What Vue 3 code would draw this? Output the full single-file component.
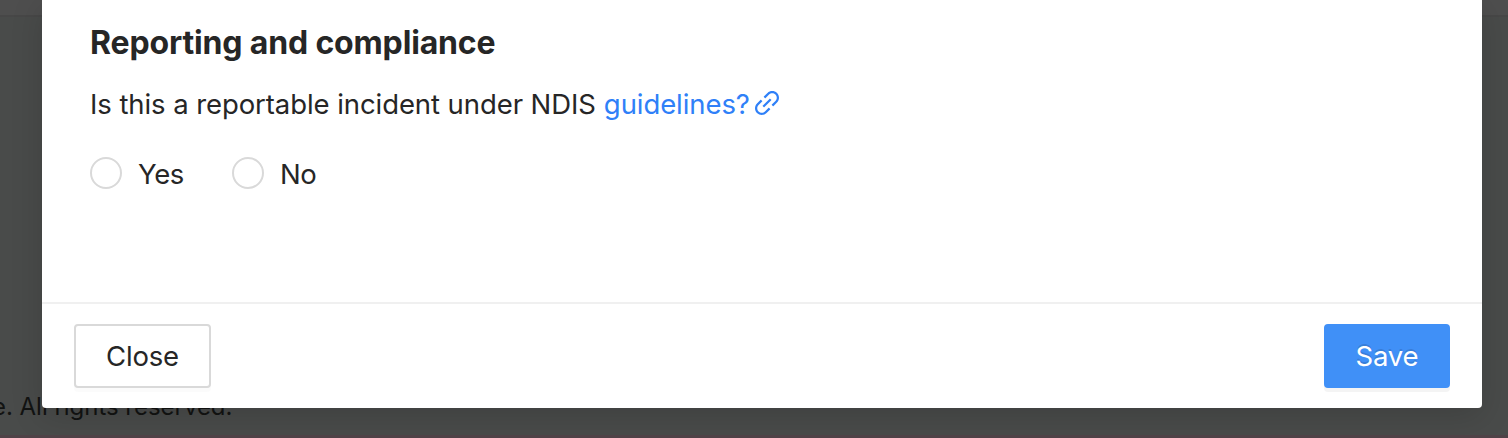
<script setup>
import { ref } from 'vue'

const answer = ref('')
const options = ['Yes', 'No']
</script>

<template>
  <div class="page">
    <div class="topbar"></div>
    <div class="content"></div>
    <footer class="page-footer"><span>e. All rights reserved.</span></footer>
    <section class="modal" role="dialog">
      <div class="body">
        <h2>Reporting and compliance</h2>
        <p class="question">
          <span class="prompt">Is this a reportable incident under NDIS</span>
          <a class="link">
            <span class="link-text">guidelines?</span>
            <svg viewBox="0 0 1024 1024" width="32" height="32" fill="currentColor">
              <path d="M574 665.4a8.03 8.03 0 00-11.3 0L446.5 781.6c-53.8 53.8-144.6 59.5-204 0-59.5-59.5-53.8-150.2 0-204l116.2-116.2c3.1-3.1 3.1-8.2 0-11.3l-39.8-39.8a8.03 8.03 0 00-11.3 0L191.4 526.5c-84.6 84.6-84.6 221.5 0 306s221.5 84.6 306 0l116.2-116.2c3.1-3.1 3.1-8.2 0-11.3L574 665.4zm258.6-474c-84.6-84.6-221.5-84.6-306 0L410.3 307.6a8.03 8.03 0 000 11.3l39.7 39.7c3.1 3.1 8.2 3.1 11.3 0l116.2-116.2c53.8-53.8 144.6-59.5 204 0 59.5 59.5 53.8 150.2 0 204L665.3 562.6a8.03 8.03 0 000 11.3l39.8 39.8c3.1 3.1 8.2 3.1 11.3 0l116.2-116.2c84.5-84.6 84.5-221.5 0-306.1zM610.1 372.3a8.03 8.03 0 00-11.3 0L372.3 598.7a8.03 8.03 0 000 11.3l39.6 39.6c3.1 3.1 8.2 3.1 11.3 0l226.4-226.4c3.1-3.1 3.1-8.2 0-11.3l-39.5-39.6z" />
            </svg>
          </a>
        </p>
        <div class="radios">
          <label v-for="o in options" :key="o" class="radio">
            <input v-model="answer" type="radio" name="reportable" :value="o" />
            <span>{{ o }}</span>
          </label>
        </div>
      </div>
      <div class="actions">
        <button class="btn close" type="button">Close</button>
        <button class="btn save" type="button">Save</button>
      </div>
    </section>
  </div>
</template>

<style>
body {
  margin: 0;
  overflow: hidden;
}
</style>

<style scoped>
.page {
  position: relative;
  display: flex;
  flex-direction: column;
  width: 1508px;
  height: 438px;
  box-sizing: border-box;
  overflow: hidden;
  background: #494b4a;
  border-bottom: 3px solid #4f4247;
  font-family: Inter, "Liberation Sans", sans-serif;
  font-size: 27.5px;
  letter-spacing: -0.08px;
  color: #262626;
}
.topbar {
  height: 15px;
  background: #4e4e4e;
  border-bottom: 2px solid #474747;
}
.content {
  flex: 1;
}
.page-footer {
  height: 44px;
  font-size: 24px;
  line-height: 32px;
  color: #121312;
  white-space: nowrap;
}
.page-footer span {
  display: inline-block;
  margin-left: -8px;
  letter-spacing: -0.03px;
}
.modal {
  position: absolute;
  top: 0;
  left: 42px;
  display: flex;
  flex-direction: column;
  width: 1440px;
  height: 408px;
  background: #fff;
  border-radius: 0 0 4px 4px;
  box-shadow: 0 8px 32px rgba(0, 0, 0, 0.15);
}
.body {
  flex: 1;
  padding: 19px 48px 0;
}
h2 {
  margin: 0;
  font-size: 32px;
  line-height: 48px;
  font-weight: 700;
  letter-spacing: -0.15px;
}
.question {
  display: flex;
  align-items: center;
  height: 44px;
  margin: 15px 0 0;
}
.link {
  display: flex;
  align-items: center;
  margin-left: 8px;
  color: #2f80f8;
}
.link svg {
  margin: -2px 0 0 1px;
}
.radios {
  display: flex;
  gap: 48px;
  margin-top: 26px;
}
.radio {
  display: flex;
  align-items: center;
  gap: 16px;
  height: 44px;
}
.radio input {
  appearance: none;
  width: 32px;
  height: 32px;
  margin: -2px 0 0;
  border: 2px solid #d9d9d9;
  border-radius: 50%;
  background: #fff;
}
.radio span {
  letter-spacing: -0.4px;
}
.actions {
  display: flex;
  justify-content: space-between;
  height: 84px;
  padding: 20px 32px 0;
  border-top: 2px solid #f0f0f0;
}
.btn {
  height: 64px;
  padding: 0;
  border-radius: 4px;
  font: inherit;
  letter-spacing: -0.15px;
  line-height: 60px;
}
.close {
  width: 137px;
  border: 2px solid #d9d9d9;
  background: #fff;
  color: #262626;
  box-shadow: 0 4px 0 rgba(0, 0, 0, 0.016);
}
.save {
  width: 126px;
  border: 2px solid #4090f7;
  background: #4090f7;
  color: #fff;
  text-shadow: 0 -2px 0 rgba(0, 0, 0, 0.12);
  box-shadow: 0 4px 0 rgba(0, 0, 0, 0.045);
}
</style>
